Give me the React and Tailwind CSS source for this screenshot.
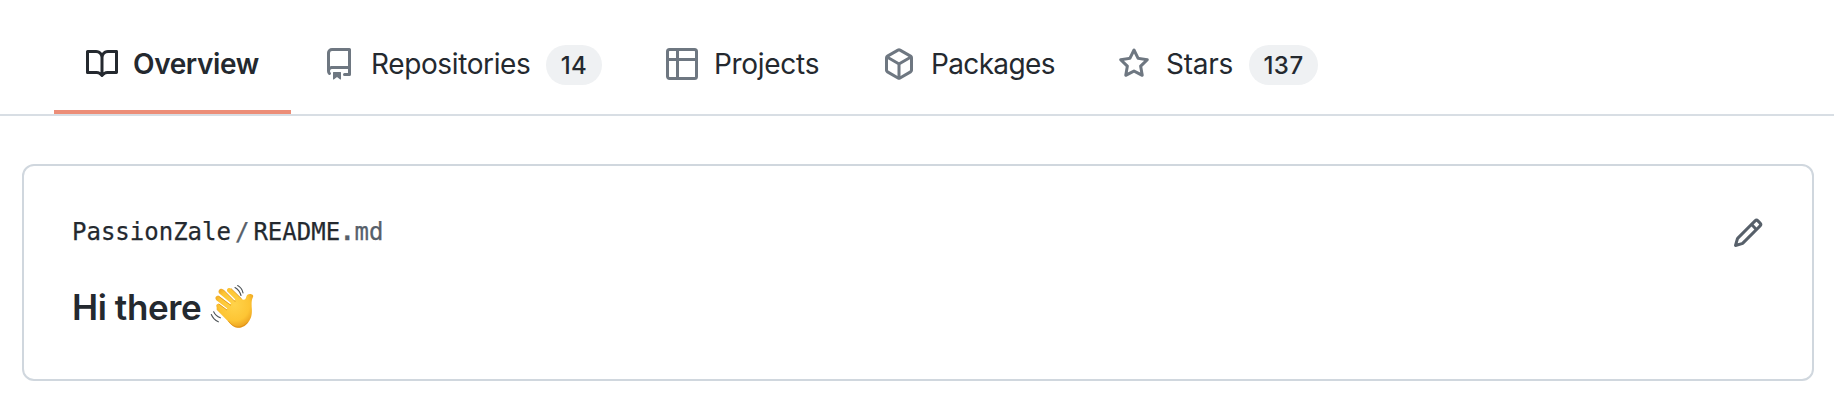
const paths = {
  book: "M0 1.75A.75.75 0 01.75 1h4.253c1.227 0 2.317.59 3 1.501A3.744 3.744 0 0111.006 1h4.245a.75.75 0 01.75.75v10.5a.75.75 0 01-.75.75h-4.507a2.25 2.25 0 00-1.591.659l-.622.621a.75.75 0 01-1.06 0l-.622-.621A2.25 2.25 0 005.258 13H.75a.75.75 0 01-.75-.75V1.75zm8.755 3a2.25 2.25 0 012.25-2.25H14.5v9h-3.757c-.71 0-1.4.201-1.992.572l.004-7.322zm-1.504 7.324l.004-5.073-.002-2.253A2.25 2.25 0 005.003 2.5H1.5v9h3.757a3.75 3.75 0 011.994.574z",
  repo: "M2 2.5A2.5 2.5 0 014.5 0h8.75a.75.75 0 01.75.75v12.5a.75.75 0 01-.75.75h-2.5a.75.75 0 110-1.5h1.75v-2h-8a1 1 0 00-.714 1.7.75.75 0 01-1.072 1.05A2.495 2.495 0 012 11.5v-9zm10.5-1V9h-8c-.356 0-.694.074-1 .208V2.5a1 1 0 011-1h8zM5 12.25v3.25a.25.25 0 00.4.2l1.45-1.087a.25.25 0 01.3 0L8.6 15.7a.25.25 0 00.4-.2v-3.25a.25.25 0 00-.25-.25h-3.5a.25.25 0 00-.25.25z",
  table: "M1.75 0A1.75 1.75 0 000 1.75v12.5C0 15.216.784 16 1.75 16h12.5A1.75 1.75 0 0016 14.25V1.75A1.75 1.75 0 0014.25 0H1.75zM1.5 1.75a.25.25 0 01.25-.25H5V5H1.5V1.75zM5 6.5H1.5v7.75c0 .138.112.25.25.25H5v-8zm1.5 8v-8h8v7.75a.25.25 0 01-.25.25H6.5zm8-9.5h-8V1.5h7.75a.25.25 0 01.25.25V5z",
  pkg: "M8.878.392a1.75 1.75 0 00-1.756 0l-5.25 3.045A1.75 1.75 0 001 4.951v6.098c0 .624.332 1.2.872 1.514l5.25 3.045a1.75 1.75 0 001.756 0l5.25-3.045c.54-.313.872-.89.872-1.514V4.951c0-.624-.332-1.2-.872-1.514L8.878.392zM7.875 1.69a.25.25 0 01.25 0l4.63 2.685L8 7.133 3.245 4.375l4.63-2.685zM2.5 5.677v5.372c0 .09.047.171.125.216l4.625 2.683V8.432L2.5 5.677zm6.25 8.271l4.625-2.683a.25.25 0 00.125-.216V5.677L8.75 8.432v5.516z",
  star: "M8 .25a.75.75 0 01.673.418l1.882 3.815 4.21.612a.75.75 0 01.416 1.279l-3.046 2.97.719 4.192a.75.75 0 01-1.088.791L8 12.347l-3.766 1.98a.75.75 0 01-1.088-.79l.72-4.194L.818 6.374a.75.75 0 01.416-1.28l4.21-.611L7.327.668A.75.75 0 018 .25zm0 2.445L6.615 5.5a.75.75 0 01-.564.41l-3.097.45 2.24 2.184a.75.75 0 01.216.664l-.528 3.084 2.769-1.456a.75.75 0 01.698 0l2.77 1.456-.53-3.084a.75.75 0 01.216-.664l2.24-2.183-3.096-.45a.75.75 0 01-.564-.41L8 2.694z",
  pencil: "M11.013 1.427a1.75 1.75 0 012.474 0l1.086 1.086a1.75 1.75 0 010 2.474l-8.61 8.61c-.21.21-.47.364-.756.445l-3.251.93a.75.75 0 01-.927-.928l.929-3.25a1.75 1.75 0 01.445-.758l8.61-8.61zm1.414 1.06a.25.25 0 00-.354 0L10.811 3.75l1.439 1.44 1.263-1.263a.25.25 0 000-.354l-1.086-1.086zM11.189 6.25L9.75 4.81l-6.286 6.287a.25.25 0 00-.064.108l-.558 1.953 1.953-.558a.249.249 0 00.108-.064l6.286-6.286z",
};

function Icon({ name, className }) {
  return (
    <svg viewBox="0 0 16 16" fill="currentColor" fillRule="evenodd" aria-hidden="true" className={`size-8 shrink-0 ${className}`}>
      <path d={paths[name]} />
    </svg>
  );
}

const tabs = [
  { label: "Overview", icon: "book", active: true, width: "w-[237px]", text: "w-[127px] tracking-[-0.38px]" },
  { label: "Repositories", icon: "repo", count: 14, width: "w-[343px]", text: "w-[161px] tracking-[-0.38px]", pill: "w-14" },
  { label: "Projects", icon: "table", width: "w-[217px]", text: "w-[106px] tracking-[-0.3px]" },
  { label: "Packages", icon: "pkg", width: "w-[235px]", text: "w-[124px] tracking-[-0.65px]" },
  { label: "Stars", icon: "star", count: 137, width: "w-[264px]", text: "w-[69px] tracking-[-0.25px]", pill: "w-[69px]" },
];

function Tab({ tab }) {
  return (
    <a
      className={`flex h-full shrink-0 items-start border-b-4 pt-12 pl-8 ${tab.width} ${
        tab.active ? "border-[#ec8e78] font-semibold" : "border-transparent"
      }`}
    >
      <Icon name={tab.icon} className={tab.active ? "text-[#24292f]" : "text-[#6e7781]"} />
      <span className={`shrink-0 text-[28px] leading-8 whitespace-nowrap ${tab.active ? "ml-[15px]" : "ml-4"} ${tab.text}`}>
        {tab.label}
      </span>
      {tab.count && (
        <span
          className={`-mt-[3px] ml-3.5 flex h-10 shrink-0 items-center justify-center rounded-full bg-[#eff1f3] text-2xl leading-10 font-medium tracking-[0.5px] ${tab.pill}`}
        >
          <span className="pt-px">{tab.count}</span>
        </span>
      )}
    </a>
  );
}

function WavingHand() {
  return (
    <svg viewBox="30 24 132 134" role="img" aria-label="waving hand" className="h-[45px] w-11">
      <defs>
        <radialGradient id="skin" cx="0.5" cy="0.42" r="0.62">
          <stop offset="0" stopColor="#ffd34a" />
          <stop offset="0.65" stopColor="#fdc534" />
          <stop offset="1" stopColor="#e89a1c" />
        </radialGradient>
      </defs>
      <path
        fill="url(#skin)"
        d="M50 93C46 86 53 81 59 84L79 99L82 97L49 72C42 65 50 56 58 60L90 84L93 81L57 51C52 43 62 34 69 40L102 73L106 70L82 46C78 38 87 32 93 37L124 67C130 73 136 72 138 65C140 55 145 53 154 54C160 55 161 60 158 65C154 74 155 80 155 92C157 111 155 123 148 134C138 150 125 156 113 155C102 154 93 146 84 135L50 101Z"
      />
      <g fill="none" stroke="#dd8d13" strokeWidth="2.2" strokeLinecap="round">
        <path d="M57 84L80 101" />
        <path d="M57 61L92 87" />
        <path d="M70 41L105 76" />
        <path d="M94 38L124 67" />
        <path d="M86 136C101 156 121 160 142 140" />
      </g>
      <g fill="none" stroke="#50565a" strokeWidth="3.4" strokeLinecap="round">
        <path d="M105 34Q119 42 123 58" />
        <path d="M113 28Q126 35 129 50" />
        <path d="M41 107Q47 120 61 125" />
        <path d="M34 115Q40 130 55 137" />
      </g>
    </svg>
  );
}

export default function App() {
  return (
    <div className="h-[400px] w-full overflow-hidden bg-white font-['Inter',sans-serif] text-[#24292f]">
      <nav className="flex h-[116px] items-start border-b-2 border-[#d8dee4] pl-[54px]">
        {tabs.map((tab) => (
          <Tab key={tab.label} tab={tab} />
        ))}
      </nav>
      <main className="pt-12 pr-5 pl-[22px]">
        <section className="h-[217px] rounded-xl border-2 border-[#d0d7de] px-12 pt-[50px]">
          <div className="flex items-start justify-between">
            <div className="flex font-['DejaVu_Sans_Mono',monospace] text-2xl leading-8 [-webkit-text-stroke:0.25px_currentColor]">
              <span>PassionZale</span>
              <span className="mx-1 text-[#57606a]">/</span>
              <span>README</span>
              <span className="text-[#57606a]">
                <b>.</b>md
              </span>
            </div>
            <Icon name="pencil" className="mt-px text-[#57606a]" />
          </div>
          <h1 className="mt-[35px] flex items-start text-[35px] leading-[47px] font-semibold tracking-[-0.4px]">
            <span className="w-[138px] shrink-0 whitespace-nowrap">Hi there</span>
            <WavingHand />
          </h1>
        </section>
      </main>
    </div>
  );
}
